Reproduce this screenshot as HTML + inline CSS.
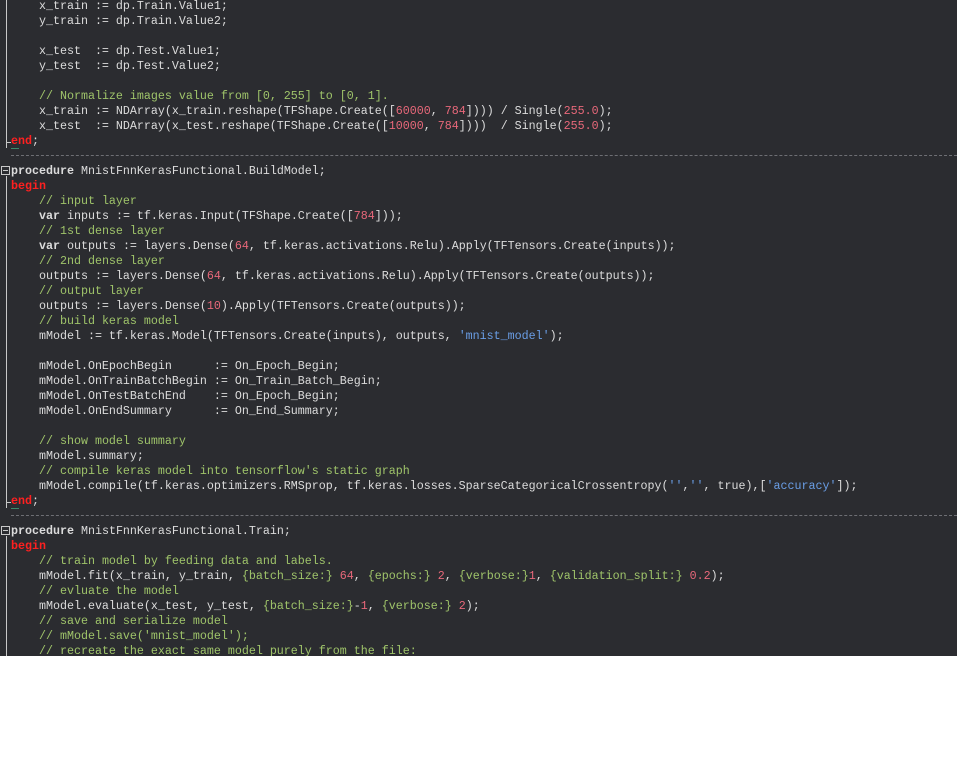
<!DOCTYPE html>
<html><head><meta charset="utf-8"><style>
body{margin:0;background:#fff;width:957px;height:771px;overflow:hidden}
#ed{position:absolute;left:0;top:0;width:957px;height:656px;background:#2b2c30;overflow:hidden}
.l{position:absolute;left:11px;height:15px;line-height:15px;white-space:pre;font-family:"Liberation Mono",monospace;font-size:11.67px;color:#dcdcdc;margin-top:1px}
.c{color:#9fc46a}.n{color:#e8687a}.s{color:#6a9ee6}.k{color:#ff2020;font-weight:bold}.b{font-weight:bold}
.g{position:absolute;left:6px;width:1px;background:#c8c8c8}
.d{position:absolute;left:11px;right:0;height:0;border-top:1px dashed #6e6f74}
.box{position:absolute;left:1px;width:7px;height:7px;border:1px solid #c8c8c8;background:#2b2c30}
.box:after{content:"";position:absolute;left:1px;top:3px;width:5px;height:1px;background:#c8c8c8}
.t{position:absolute;left:6px;width:5px;height:1px;background:#c8c8c8}
.u{position:absolute;left:11px;width:8px;height:1px;background:#3c8a6a}
</style></head><body><div id="ed">
<div class="g" style="top:0;height:148px"></div>
<div class="t" style="top:142px"></div><div class="u" style="top:148px"></div>
<div class="d" style="top:155px"></div>
<div class="box" style="top:166px"></div>
<div class="g" style="top:176px;height:332px"></div>
<div class="t" style="top:502px"></div><div class="u" style="top:508px"></div>
<div class="d" style="top:515px"></div>
<div class="box" style="top:526px"></div>
<div class="g" style="top:536px;height:120px"></div>
<div class="l" style="top:-2px">    x_train := dp.Train.Value1;</div>
<div class="l" style="top:13px">    y_train := dp.Train.Value2;</div>
<div class="l" style="top:43px">    x_test  := dp.Test.Value1;</div>
<div class="l" style="top:58px">    y_test  := dp.Test.Value2;</div>
<div class="l" style="top:88px">    <span class="c">// Normalize images value from [0, 255] to [0, 1].</span></div>
<div class="l" style="top:103px">    x_train := NDArray(x_train.reshape(TFShape.Create([<span class="n">60000</span>, <span class="n">784</span>]))) / Single(<span class="n">255.0</span>);</div>
<div class="l" style="top:118px">    x_test  := NDArray(x_test.reshape(TFShape.Create([<span class="n">10000</span>, <span class="n">784</span>])))  / Single(<span class="n">255.0</span>);</div>
<div class="l" style="top:133px"><span class="k">end</span>;</div>
<div class="l" style="top:163px"><span class="b">procedure</span> MnistFnnKerasFunctional.BuildModel;</div>
<div class="l" style="top:178px"><span class="k">begin</span></div>
<div class="l" style="top:193px">    <span class="c">// input layer</span></div>
<div class="l" style="top:208px">    <span class="b">var</span> inputs := tf.keras.Input(TFShape.Create([<span class="n">784</span>]));</div>
<div class="l" style="top:223px">    <span class="c">// 1st dense layer</span></div>
<div class="l" style="top:238px">    <span class="b">var</span> outputs := layers.Dense(<span class="n">64</span>, tf.keras.activations.Relu).Apply(TFTensors.Create(inputs));</div>
<div class="l" style="top:253px">    <span class="c">// 2nd dense layer</span></div>
<div class="l" style="top:268px">    outputs := layers.Dense(<span class="n">64</span>, tf.keras.activations.Relu).Apply(TFTensors.Create(outputs));</div>
<div class="l" style="top:283px">    <span class="c">// output layer</span></div>
<div class="l" style="top:298px">    outputs := layers.Dense(<span class="n">10</span>).Apply(TFTensors.Create(outputs));</div>
<div class="l" style="top:313px">    <span class="c">// build keras model</span></div>
<div class="l" style="top:328px">    mModel := tf.keras.Model(TFTensors.Create(inputs), outputs, <span class="s">'mnist_model'</span>);</div>
<div class="l" style="top:358px">    mModel.OnEpochBegin      := On_Epoch_Begin;</div>
<div class="l" style="top:373px">    mModel.OnTrainBatchBegin := On_Train_Batch_Begin;</div>
<div class="l" style="top:388px">    mModel.OnTestBatchEnd    := On_Epoch_Begin;</div>
<div class="l" style="top:403px">    mModel.OnEndSummary      := On_End_Summary;</div>
<div class="l" style="top:433px">    <span class="c">// show model summary</span></div>
<div class="l" style="top:448px">    mModel.summary;</div>
<div class="l" style="top:463px">    <span class="c">// compile keras model into tensorflow's static graph</span></div>
<div class="l" style="top:478px">    mModel.compile(tf.keras.optimizers.RMSprop, tf.keras.losses.SparseCategoricalCrossentropy(<span class="s">''</span>,<span class="s">''</span>, true),[<span class="s">'accuracy'</span>]);</div>
<div class="l" style="top:493px"><span class="k">end</span>;</div>
<div class="l" style="top:523px"><span class="b">procedure</span> MnistFnnKerasFunctional.Train;</div>
<div class="l" style="top:538px"><span class="k">begin</span></div>
<div class="l" style="top:553px">    <span class="c">// train model by feeding data and labels.</span></div>
<div class="l" style="top:568px">    mModel.fit(x_train, y_train, <span class="c">{batch_size:}</span> <span class="n">64</span>, <span class="c">{epochs:}</span> <span class="n">2</span>, <span class="c">{verbose:}</span><span class="n">1</span>, <span class="c">{validation_split:}</span> <span class="n">0.2</span>);</div>
<div class="l" style="top:583px">    <span class="c">// evluate the model</span></div>
<div class="l" style="top:598px">    mModel.evaluate(x_test, y_test, <span class="c">{batch_size:}</span>-<span class="n">1</span>, <span class="c">{verbose:}</span> <span class="n">2</span>);</div>
<div class="l" style="top:613px">    <span class="c">// save and serialize model</span></div>
<div class="l" style="top:628px">    <span class="c">// mModel.save('mnist_model');</span></div>
<div class="l" style="top:643px">    <span class="c">// recreate the exact same model purely from the file:</span></div>
</div></body></html>
